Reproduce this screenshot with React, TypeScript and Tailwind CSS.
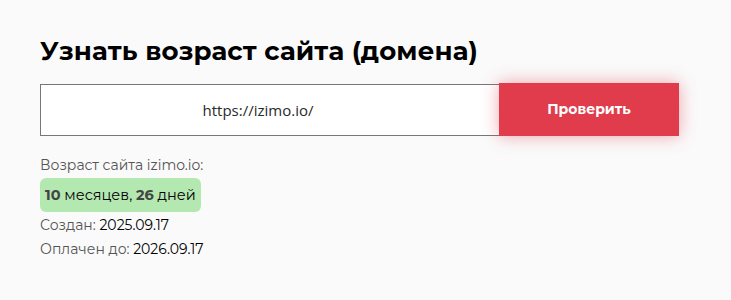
export default function App() {
  return (
    <div className="min-h-[300px] w-full bg-[#fafafa] font-['Montserrat','Noto_Sans',sans-serif] text-black">
      <div className="px-10 pt-[33px]">
        <h1 className="text-[26px] font-bold leading-[36px] tracking-[0.15px]">Узнать возраст сайта (домена)</h1>

        <div className="mt-[15px] flex w-[639px] items-stretch">
          <input
            className="h-[52px] w-[459px] border border-r-0 border-[#777] bg-white pr-6 text-center font-['Open_Sans',sans-serif] text-[15px] font-normal text-[#2a2a2a] outline-none"
            defaultValue="https://izimo.io/"
          />
          <button className="-mt-px h-[53px] w-[180px] bg-[#e03c4b] text-[14px] font-bold text-white shadow-[0_0_16px_rgba(224,60,75,0.45)]">
            Проверить
          </button>
        </div>

        <div className="mt-[18px] text-[14px] leading-[23px] text-[#555]">
          <p>Возраст сайта izimo.io:</p>
          <div className="mt-[1px] inline-flex h-[34px] items-center rounded-md bg-[#b3e8b0] px-[5px] text-[14.5px] text-black">
            <span><b className="text-[#444]">10</b> месяцев, <b className="text-[#444]">26</b> дней</span>
          </div>
          <p className="mt-[1px] leading-[24px]">Создан: <span className="text-black">2025.09.17</span></p>
          <p className="leading-[24px]">Оплачен до: <span className="text-black">2026.09.17</span></p>
        </div>
      </div>
    </div>
  );
}
